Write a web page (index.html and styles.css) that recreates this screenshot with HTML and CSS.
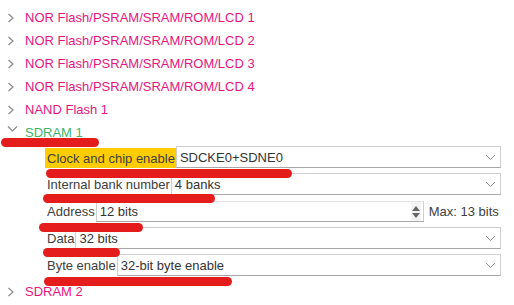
FILE: index.html
```html
<!DOCTYPE html>
<html>
<head>
<meta charset="utf-8">
<link rel="stylesheet" href="styles.css">
</head>
<body>
<div class="page">
  <ul class="tree">
    <li class="node"><svg class="chev" viewBox="0 0 8 10" width="8" height="10"><polyline points="1.5,1 6,5 1.5,9" /></svg><span class="name">NOR Flash/PSRAM/SRAM/ROM/LCD 1</span></li>
    <li class="node"><svg class="chev" viewBox="0 0 8 10" width="8" height="10"><polyline points="1.5,1 6,5 1.5,9" /></svg><span class="name">NOR Flash/PSRAM/SRAM/ROM/LCD 2</span></li>
    <li class="node"><svg class="chev" viewBox="0 0 8 10" width="8" height="10"><polyline points="1.5,1 6,5 1.5,9" /></svg><span class="name">NOR Flash/PSRAM/SRAM/ROM/LCD 3</span></li>
    <li class="node"><svg class="chev" viewBox="0 0 8 10" width="8" height="10"><polyline points="1.5,1 6,5 1.5,9" /></svg><span class="name">NOR Flash/PSRAM/SRAM/ROM/LCD 4</span></li>
    <li class="node"><svg class="chev" viewBox="0 0 8 10" width="8" height="10"><polyline points="1.5,1 6,5 1.5,9" /></svg><span class="name">NAND Flash 1</span></li>
    <li class="node open"><svg class="chev down" viewBox="0 0 11 8" width="11" height="8"><polyline points="1,1.5 5.5,6 10,1.5" /></svg><span class="name">SDRAM 1</span></li>
  </ul>

  <div class="form">
    <div class="row">
      <span class="label hl">Clock and chip enable</span>
      <div class="select"><span class="val">SDCKE0+SDNE0</span><svg class="dd" viewBox="0 0 11 7" width="11" height="7"><polyline points="1,1 5.5,5.5 10,1" /></svg></div>
    </div>
    <div class="row">
      <span class="label">Internal bank number</span>
      <div class="select"><span class="val">4 banks</span><svg class="dd" viewBox="0 0 11 7" width="11" height="7"><polyline points="1,1 5.5,5.5 10,1" /></svg></div>
    </div>
    <div class="row">
      <span class="label">Address</span>
      <div class="spin"><span class="val">12 bits</span>
        <div class="arrows">
          <svg viewBox="0 0 8 5" width="8" height="5"><polygon points="0,5 4,0 8,5" /></svg>
          <svg viewBox="0 0 8 5" width="8" height="5"><polygon points="0,0 4,5 8,0" /></svg>
        </div>
      </div>
      <span class="max">Max: 13 bits</span>
    </div>
    <div class="row">
      <span class="label">Data</span>
      <div class="select"><span class="val">32 bits</span><svg class="dd" viewBox="0 0 11 7" width="11" height="7"><polyline points="1,1 5.5,5.5 10,1" /></svg></div>
    </div>
    <div class="row">
      <span class="label">Byte enable</span>
      <div class="select"><span class="val">32-bit byte enable</span><svg class="dd" viewBox="0 0 11 7" width="11" height="7"><polyline points="1,1 5.5,5.5 10,1" /></svg></div>
    </div>
  </div>

  <ul class="tree after">
    <li class="node"><svg class="chev" viewBox="0 0 8 10" width="8" height="10"><polyline points="1.5,1 6,5 1.5,9" /></svg><span class="name">SDRAM 2</span></li>
  </ul>

  <div class="mark m1"></div>
  <div class="mark m2"></div>
  <div class="mark m3"></div>
  <div class="mark m4"></div>
  <div class="mark m5"></div>
  <div class="mark m6"></div>
</div>
</body>
</html>
```

FILE: styles.css
```css
html, body {
  margin: 0;
  padding: 0;
  background: #ffffff;
}
body {
  font-family: "Liberation Sans", Arial, sans-serif;
  font-size: 13px;
  color: #3c3c3c;
}
.page {
  position: relative;
  width: 514px;
  height: 305px;
  overflow: hidden;
  padding-top: 6px;
  box-sizing: border-box;
}
.tree {
  list-style: none;
  margin: 0;
  padding: 0;
}
.tree.after {
  margin-top: 4px;
}
.node {
  height: 23px;
  display: flex;
  align-items: center;
  padding-left: 7px;
}
.chev {
  width: 8px;
  height: 10px;
  margin-right: 10px;
  fill: none;
  stroke: #8a8a8a;
  stroke-width: 1.2;
}
.chev.down {
  width: 11px;
  height: 8px;
  margin-right: 7px;
  margin-top: -7px;
}
.name {
  color: #e5157f;
}
.open .name {
  color: #3db56a;
}
.form {
  margin-top: 2px;
  padding-left: 45px;
  padding-right: 13px;
  display: flex;
  flex-direction: column;
  gap: 5px;
}
.row {
  display: flex;
  align-items: stretch;
  height: 22px;
}
.label {
  display: flex;
  align-items: center;
  padding: 0 1px 0 2px;
  color: #404040;
  white-space: nowrap;
}
.label.hl {
  background: #ffcc00;
  margin: 2px 0 0 0;
}
.select, .spin {
  flex: 1;
  display: flex;
  align-items: center;
  justify-content: space-between;
  background: #fff;
  border: 1px solid #cfcfcf;
  border-bottom-color: #a8a8a8;
  box-sizing: border-box;
  padding-left: 3px;
  color: #333;
}
.select {
  padding-right: 4px;
}
.dd {
  fill: none;
  stroke: #8d8d8d;
  stroke-width: 1;
}
.spin {
  flex: 0 0 328px;
  padding-right: 2px;
  border-top-color: #e2e2e2;
  margin-top: 1px;
  height: 21px;
}
.arrows {
  display: flex;
  flex-direction: column;
  gap: 2px;
  width: 10px;
  align-items: center;
  height: 100%;
  justify-content: center;
  background: #f3f3f3;
}
.arrows svg {
  fill: #666;
}
.max {
  display: flex;
  align-items: center;
  padding-left: 5px;
  color: #404040;
  white-space: nowrap;
}
.mark {
  position: absolute;
  background: #e41c1c;
  border-radius: 5px;
  height: 9px;
}
.m1 { left: 1px;  top: 138px; width: 98px; }
.m2 { left: 46px; top: 169px; width: 246px; }
.m3 { left: 43px; top: 194px; width: 172px; }
.m4 { left: 39px; top: 223px; width: 104px; }
.m5 { left: 43px; top: 248px; width: 77px; }
.m6 { left: 44px; top: 277px; width: 188px; }
```
